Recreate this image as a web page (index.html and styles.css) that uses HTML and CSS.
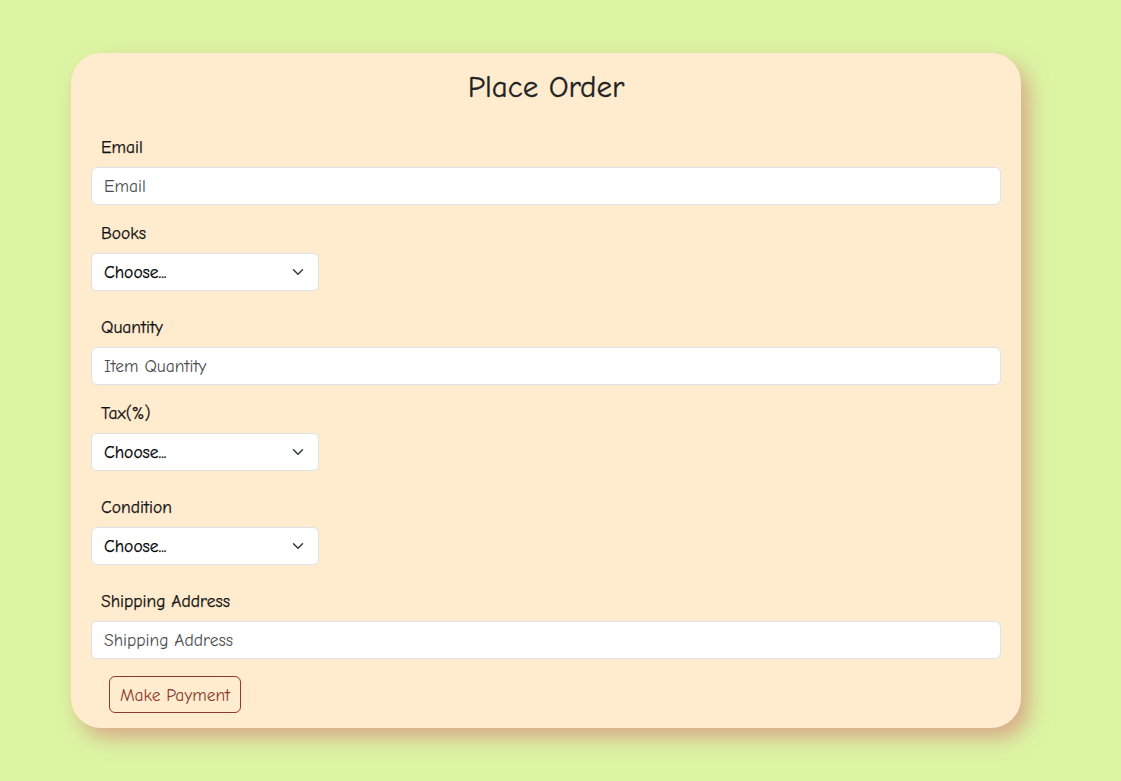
FILE: index.html
```html
<!DOCTYPE html>
<html lang="en">
<head>
<meta charset="utf-8">
<title>Place Order</title>
<link rel="stylesheet" href="styles.css">
</head>
<body>
<main class="page">
  <form class="card">
    <h3 class="title">Place Order</h3>

    <div class="field">
      <label class="label" for="email">Email</label>
      <input class="input" id="email" type="email" placeholder="Email">
    </div>

    <div class="field field-select">
      <label class="label" for="books">Books</label>
      <div class="select-wrap">
        <select class="select" id="books"><option>Choose...</option></select>
        <svg class="chev" width="16" height="12" viewBox="0 0 16 16"><path d="m2 5 6 6 6-6" fill="none" stroke="#343a40" stroke-width="2" stroke-linecap="round" stroke-linejoin="round"/></svg>
      </div>
    </div>

    <div class="field">
      <label class="label" for="qty">Quantity</label>
      <input class="input" id="qty" type="text" placeholder="Item Quantity">
    </div>

    <div class="field field-select">
      <label class="label" for="tax">Tax(%)</label>
      <div class="select-wrap">
        <select class="select" id="tax"><option>Choose...</option></select>
        <svg class="chev" width="16" height="12" viewBox="0 0 16 16"><path d="m2 5 6 6 6-6" fill="none" stroke="#343a40" stroke-width="2" stroke-linecap="round" stroke-linejoin="round"/></svg>
      </div>
    </div>

    <div class="field field-select">
      <label class="label" for="cond">Condition</label>
      <div class="select-wrap">
        <select class="select" id="cond"><option>Choose...</option></select>
        <svg class="chev" width="16" height="12" viewBox="0 0 16 16"><path d="m2 5 6 6 6-6" fill="none" stroke="#343a40" stroke-width="2" stroke-linecap="round" stroke-linejoin="round"/></svg>
      </div>
    </div>

    <div class="field">
      <label class="label" for="ship">Shipping Address</label>
      <input class="input" id="ship" type="text" placeholder="Shipping Address">
    </div>

    <div class="actions">
      <button class="btn" type="button">Make Payment</button>
    </div>
  </form>
</main>
</body>
</html>
```
FILE: styles.css
```css
* { box-sizing: border-box; }

html, body {
  margin: 0;
  padding: 0;
}

body {
  background: #dbf5a3;
  font-family: "Comic Sans MS", "Comic Neue", "DejaVu Sans", sans-serif;
  color: #212529;
  width: 1121px;
  height: 781px;
  overflow: hidden;
}

.page {
  padding: 53px 100px 0 71px;
}

.card {
  width: 950px;
  height: 675px;
  background: #ffebcd;
  border-radius: 30px;
  padding: 17px 20px 15px;
  box-shadow: 8px 10px 20px rgba(215, 120, 120, 0.6);
  display: flex;
  flex-direction: column;
}

.title {
  margin: 0 0 31px;
  font-size: 31px;
  font-weight: 400;
  line-height: 34px;
  text-align: center;
  color: #222;
  -webkit-text-stroke: 0.3px #222;
}

.field {
  display: flex;
  flex-direction: column;
  margin-bottom: 16px;
}

.field-select {
  margin-bottom: 24px;
}

.label {
  font-size: 17.5px;
  line-height: 25px;
  padding-top: 0;
  margin: 0 0 7px 10px;
  color: #111;
  -webkit-text-stroke: 0.25px #111;
}

.input,
.select {
  font-family: inherit;
  font-size: 17.5px;
  height: 38px;
  padding: 6px 12px;
  border: 1px solid #dee2e6;
  border-radius: 6px;
  background: #fff;
  color: #212529;
  outline: none;
}

.input::placeholder {
  color: #4a4d50;
  opacity: 1;
}

.select-wrap {
  position: relative;
  width: 228px;
}

.select {
  width: 100%;
  appearance: none;
  -webkit-appearance: none;
  color: #000;
  -webkit-text-stroke: 0.25px #000;
}

.chev {
  position: absolute;
  right: 13px;
  top: 13px;
  pointer-events: none;
}

.actions {
  padding: 1px 0 0 18px;
}

.btn {
  font-family: inherit;
  font-size: 17.5px;
  height: 37px;
  width: 132px;
  padding: 0 8px;
  color: #8b3a2c;
  background: transparent;
  border: 1px solid #8b3a2c;
  border-radius: 6px;
}
```
